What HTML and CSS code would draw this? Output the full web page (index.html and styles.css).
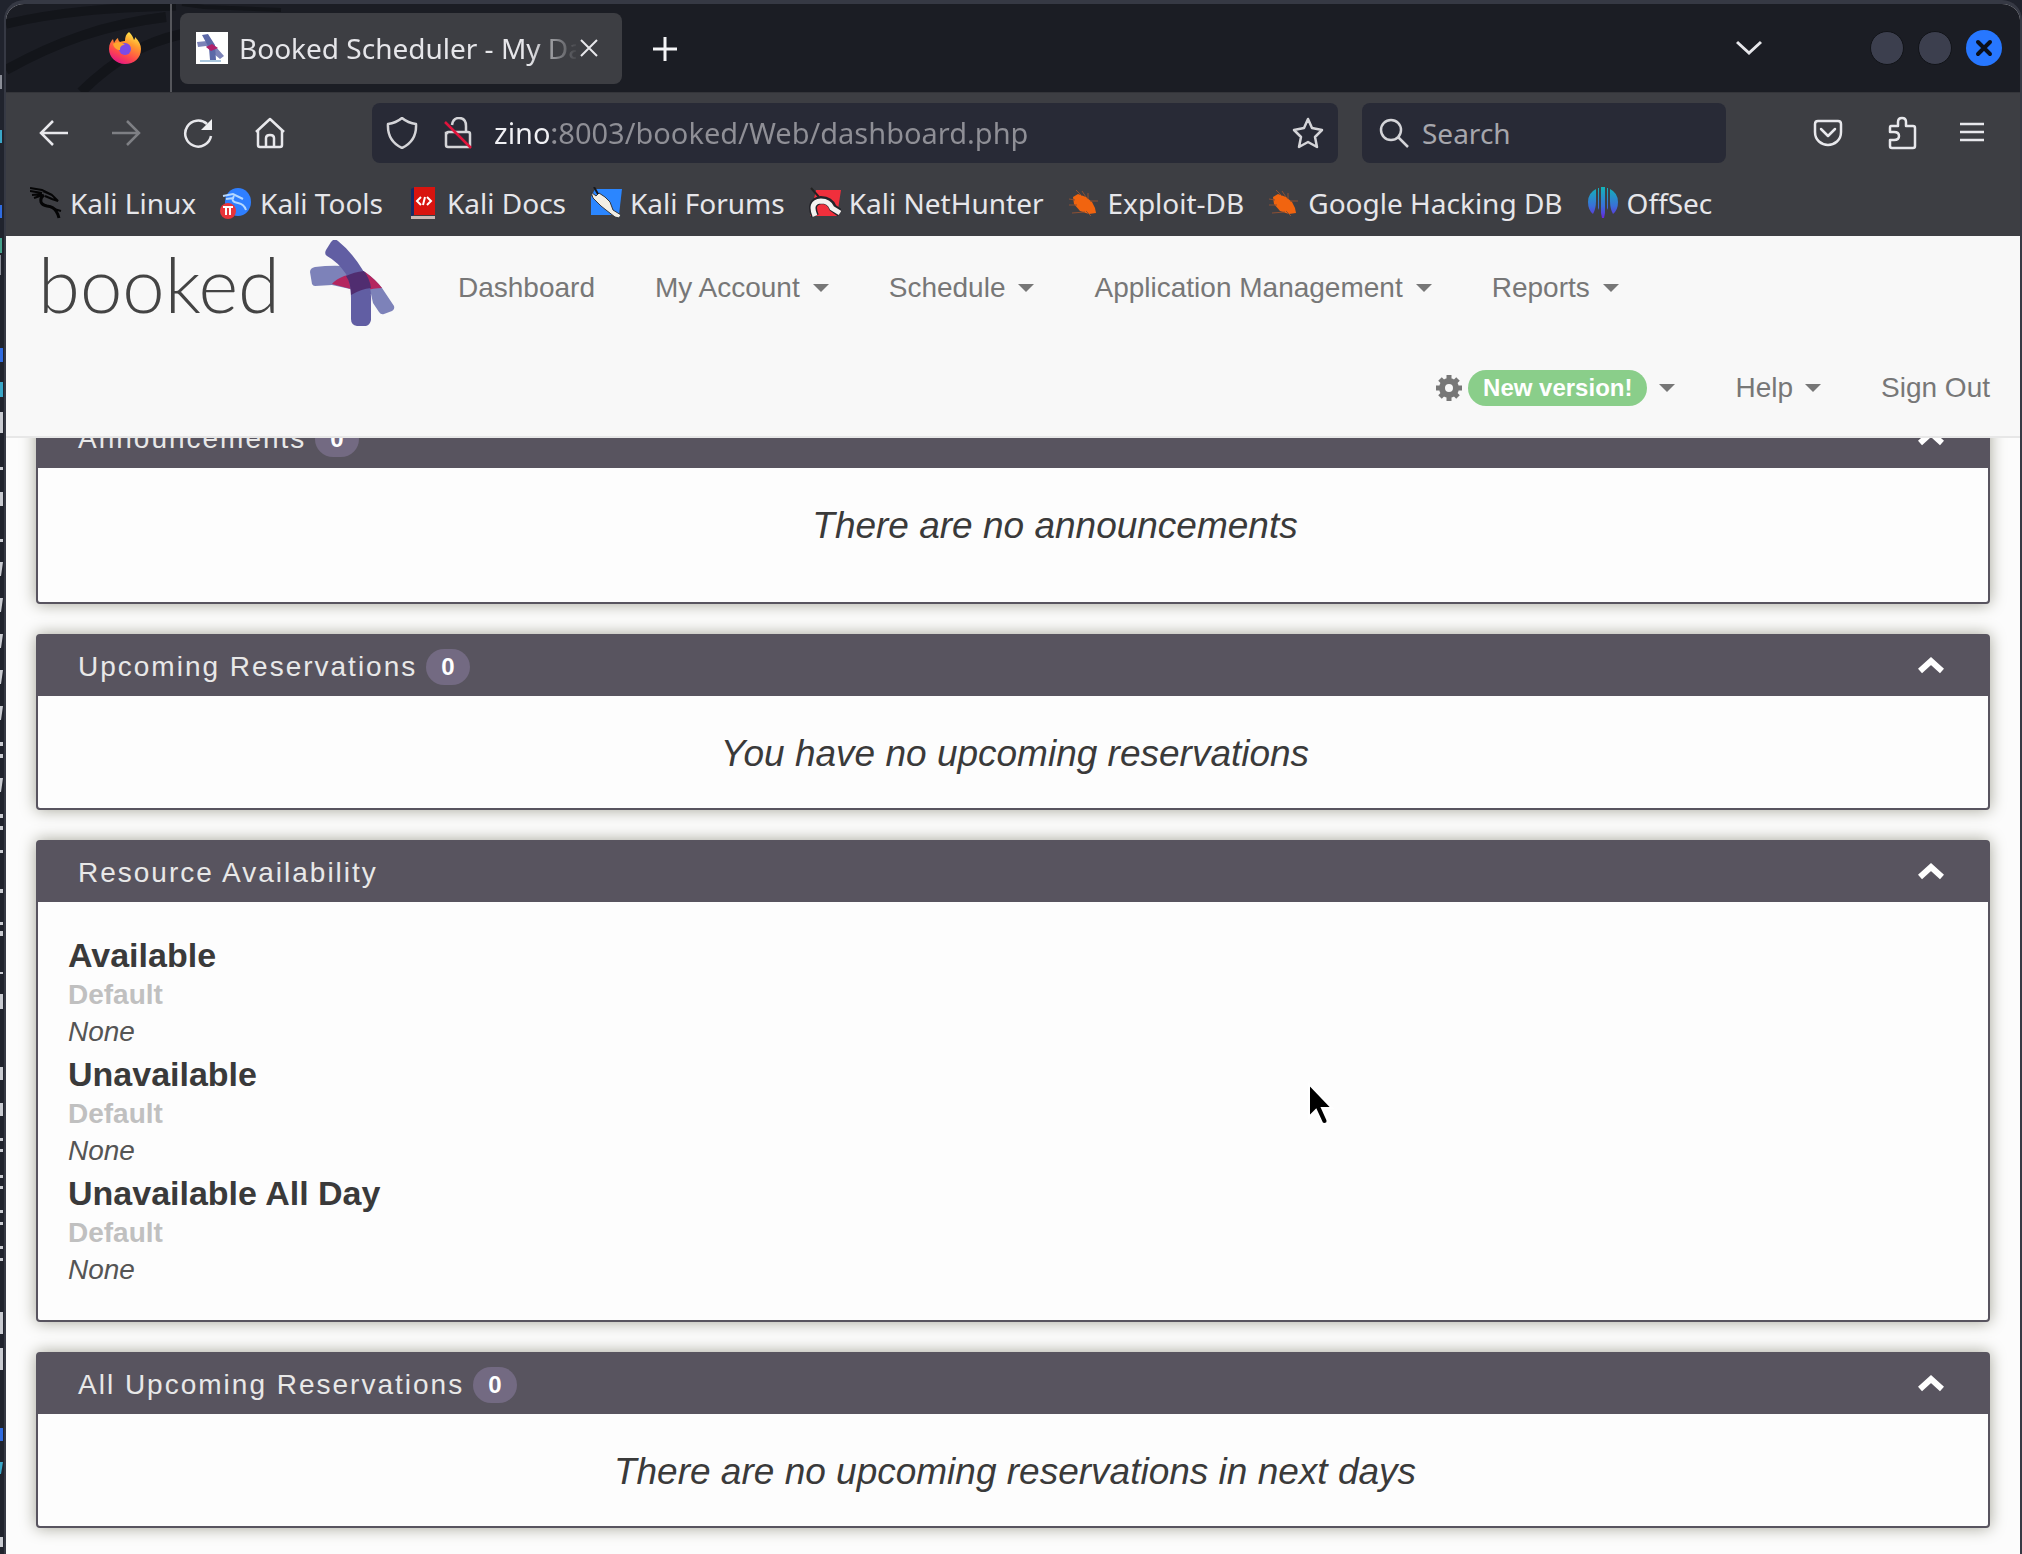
FILE: index.html
```html
<!DOCTYPE html>
<html lang="en">
<head>
<meta charset="utf-8">
<title>Booked Scheduler - My Dashboard</title>
<link rel="stylesheet" href="styles.css">
</head>
<body>
<svg class="desktop-edge" width="4" height="1554" viewBox="0 0 4 1554" aria-hidden="true">
  <g fill="#8b8e98"><path d="M0 75h2v14H0zM0 255h1v20H0z"/></g>
  <path fill="#3aa7c8" d="M0 130h2v13H0zM0 382h3v15H0zM0 1462h3l-2 12H0z"/>
  <path fill="#2f6be0" d="M0 205h2v13H0zM0 348h3v14H0zM0 1428h3v13H0z"/>
  <path fill="#46a28c" d="M0 238h2v15H0z"/>
  <path fill="#c9cbd1" d="M0 412h3v21H0zM0 467h3v3H0zM0 492h3v14H0zM0 539h3v3H0zM0 562h3l-2 14H0zM0 598h3l-2 14H0zM0 634h3l-2 14H0zM0 670h3l-2 14H0zM0 706h3l-2 14H0zM0 742h3v4H0zM0 754h3v4H0zM0 778h3l-2 14H0zM0 814h3v4H0zM0 826h3v4H0zM0 850h3v3H0zM0 889h3v4H0zM0 922h3v3H0zM0 931h3v5H0zM0 972h3v2H0zM0 994h3v15H0zM0 1067h3v13H0zM0 1103h3v13H0zM0 1138h3v3H0zM0 1149h3v3H0zM0 1175h3v3H0zM0 1186h3v3H0zM0 1210h3v3H0zM0 1222h3v3H0zM0 1246h3v3H0zM0 1258h3v3H0zM0 1312h3v22H0zM0 1348h3v22H0zM0 1537h3v10H0z"/>
</svg>
<div class="window">
  <div class="tabbar">
    <svg class="wallpaper" width="300" height="88" viewBox="0 0 300 88" fill="none" stroke="#13151a" aria-hidden="true">
      <path stroke-width="9" d="M0 20C50 8 100 4 170 2"/>
      <path stroke-width="10" d="M0 66C50 38 100 20 160 13"/>
      <path stroke-width="10" d="M75 88C110 54 140 38 176 30"/>
      <path stroke-width="4" d="M176 0L198 3L275 6"/>
    </svg>
    <button class="pinned" type="button" aria-label="Firefox View">
      <svg width="32" height="32" viewBox="0 0 32 32">
        <defs>
          <linearGradient id="flame" x1="0.8" y1="0" x2="0.3" y2="1"><stop offset="0" stop-color="#fff44f"/><stop offset=".35" stop-color="#ff9a2e"/><stop offset=".7" stop-color="#ff4a4a"/><stop offset="1" stop-color="#e31587"/></linearGradient>
        </defs>
        <path fill="url(#flame)" d="M20 0c3 3 4 5 5 8c1-1 1-2 1-3c4 4 6 8 6 12c0 9-7 15-16 15S0 25 0 17c0-5 2-8 4-10l1 4c1-2 2-4 4-5c0 2 1 3 2 4c2-1 4-1 5-1c0-4 1-7 4-9z"/>
        <circle cx="16" cy="17" r="6" fill="#7a4be8"/>
        <path fill="#ffa62e" d="M4 12c4-3 9-2 12 1c-4 0-5 2-5 5c-3 0-6-2-7-6z"/>
      </svg>
    </button>
    <div class="tab">
      <svg class="favicon" width="32" height="32" viewBox="0 0 32 32" aria-hidden="true">
        <path fill="#fff" d="M0 0h32v32H0z"/>
        <path fill="#7c83b8" d="M1 10l10-1 9 6 8 9-4 3-6-5-8-8-8 1z"/>
        <path fill="#5c69a8" d="M6 3l6-1 7 11 1 15h-6l-1-12z"/>
        <path fill="#b0216a" d="M10 15l6-3 6 4-7 3z"/>
        <path fill="#a9c6dd" d="M4 28h21v2H4z"/>
      </svg>
      <span class="tab-title">Booked Scheduler - My Dashboard</span>
      <button class="tab-close" type="button" aria-label="Close tab"><svg width="18" height="18" viewBox="0 0 18 18" fill="none" stroke="#e8e8ec" stroke-width="2"><path d="M1 1l16 16M17 1L1 17"/></svg></button>
    </div>
    <button class="new-tab" type="button" aria-label="New tab"><svg width="24" height="24" viewBox="0 0 24 24" fill="none" stroke="#f4f4f6" stroke-width="3"><path d="M12 0v24M0 12h24"/></svg></button>
    <div class="window-controls">
      <button class="all-tabs" type="button" aria-label="List all tabs"><svg width="26" height="16" viewBox="0 0 26 16" fill="none" stroke="#e6e6ea" stroke-width="3"><path d="M1 2l12 11L25 2"/></svg></button>
      <button class="dot" type="button" aria-label="Minimise"></button>
      <button class="dot" type="button" aria-label="Maximise"></button>
      <button class="dot dot-close" type="button" aria-label="Close"><svg width="18" height="18" viewBox="0 0 18 18" fill="none" stroke="#0b0f1a" stroke-width="4" stroke-linecap="round"><path d="M3 3l12 12M15 3L3 15"/></svg></button>
    </div>
  </div>

  <div class="toolbar">
    <div class="history">
      <button type="button" aria-label="Back"><svg width="32" height="32" viewBox="0 0 32 32" fill="none" stroke="#e8e8ec" stroke-width="2.5"><path d="M30 16H3M15 4L3 16l12 12"/></svg></button>
      <button type="button" aria-label="Forward"><svg width="32" height="32" viewBox="0 0 32 32" fill="none" stroke="#7e7f84" stroke-width="2.5"><path d="M2 16h27M17 4l12 12-12 12"/></svg></button>
      <button type="button" aria-label="Reload"><svg width="32" height="32" viewBox="0 0 32 32" fill="none" stroke="#e8e8ec" stroke-width="2.5"><path d="M29 19A13 13 0 1 1 25 7"/><path fill="#f0f0f2" stroke="none" d="M30 2v11H19z"/></svg></button>
      <button type="button" aria-label="Home"><svg width="32" height="32" viewBox="0 0 32 32" fill="none" stroke="#e8e8ec" stroke-width="2.5" stroke-linejoin="round"><path d="M2 15L16 2l14 13M4 14v14q0 2 2 2h20q2 0 2-2V14M12 30v-9q0-3 4-3t4 3v9"/></svg></button>
    </div>
    <div class="field url">
      <svg width="32" height="32" viewBox="0 0 32 32" fill="none" stroke="#d4d4d8" stroke-width="2.5" stroke-linejoin="round" aria-hidden="true"><path d="M16 1q6 5 14 6q1 17-14 24Q1 24 2 7q8-1 14-6z"/></svg>
      <svg class="lock" width="32" height="32" viewBox="0 0 32 32" fill="none" stroke="#d4d4d8" stroke-width="2.5" aria-hidden="true"><path d="M10 8q1-7 7-7q7 0 7 8v6M5 16q0-1 1-1h20q2 0 2 2v12q0 1-1 1H6q-2 0-2-2V16z"/><path stroke="#e0143c" d="M3 5l26 26"/></svg>
      <input class="address" type="text" aria-label="Address" value="zino:8003/booked/Web/dashboard.php">
      <button type="button" aria-label="Bookmark this page"><svg width="32" height="32" viewBox="0 0 32 32" fill="none" stroke="#d4d4d8" stroke-width="2.5" stroke-linejoin="round"><path d="M16 2l4 9 10 2-7 7 2 10-9-5-9 5 2-10-7-7 10-2z"/></svg></button>
    </div>
    <div class="field search">
      <svg width="32" height="32" viewBox="0 0 32 32" fill="none" stroke="#d4d4d8" stroke-width="2.5" aria-hidden="true"><circle cx="13" cy="13" r="10"/><path d="M20 20l10 10"/></svg>
      <input type="search" aria-label="Search" placeholder="Search">
    </div>
    <div class="tools">
      <button type="button" aria-label="Pocket"><svg width="32" height="32" viewBox="0 0 32 32" fill="none" stroke="#e8e8ec" stroke-width="2.5" stroke-linecap="round" stroke-linejoin="round"><path d="M6 4h20q3 0 3 3v8q0 6-4 9.500q-4 3.500-9 3.500t-9-3.500Q3 21 3 15V7q0-3 3-3zM9 12l7 7 7-7"/></svg></button>
      <button type="button" aria-label="Extensions"><svg width="32" height="34" viewBox="0 0 32 34" fill="none" stroke="#e8e8ec" stroke-width="2.5" stroke-linejoin="round"><path d="M5 10h7V6q0-4 4-4t4 4v4h7q2 0 2 2v18q0 2-2 2H6q-2 0-2-2v-6h4q5 0 5-4t-5-4H4v-4q0-2 1-2z"/></svg></button>
      <button type="button" aria-label="Menu"><svg width="24" height="24" viewBox="0 0 24 24" fill="none" stroke="#e8e8ec" stroke-width="2.5"><path d="M0 3h24M0 11h24M0 19h24"/></svg></button>
    </div>
  </div>

  <nav class="bookmarks" aria-label="Bookmarks">
    <a href="#"><svg width="32" height="32" viewBox="0 0 32 32" fill="none" stroke="#050506"><path stroke-width="2" d="M0 1l12 2 10 5M0 4l12 2M2 8l10-1M4 11l9-3M13 4l9 4 6 6-6-2-7-3"/><path stroke-width="3" d="M14 8q-4 3-3 7 1 3 6 4 7 1 9 5 2 3 3 7"/><path stroke-width="2" d="M24 22l7 2"/></svg>Kali Linux</a>
    <a href="#"><svg width="32" height="32" viewBox="0 0 32 32"><ellipse cx="18" cy="15" rx="13" ry="14" fill="#2f7fff"/><path fill="none" stroke="#b5d8ff" stroke-width="2" d="M3 9l10-2 10 5M6 12l8-1M14 9q-4 6 4 7q6 1 8 7"/><circle cx="8" cy="24" r="8" fill="#e8343a"/><path fill="none" stroke="#fff" stroke-width="2" d="M3 20h10M6 20v8M10 20v8"/></svg>Kali Tools</a>
    <a href="#"><svg width="32" height="32" viewBox="-3 0 32 32"><path fill="#182a66" d="M1 2l4-2v27l-4 3z"/><path fill="#d8140f" d="M4 0h21v28H4z"/><path fill="#c8b9b6" d="M1 29h24v3H1z"/><path fill="none" stroke="#fff" stroke-width="2" d="M11 10l-4 4 4 4M15 10l-2 8M17 10l4 4-4 4"/></svg>Kali Docs</a>
    <a href="#"><svg width="32" height="32" viewBox="0 0 32 32"><path fill="#2b86ff" d="M5 2h27l-3 26H1V10z"/><path fill="#f2eee4" stroke="#33363c" d="M1 5l5 4 3-3 6 4 5 5 3 8 8 5-2 3-4-1-9-7-5-4-8-8z"/><path stroke="#17181c" stroke-width="2" d="M4 0l4 7"/></svg>Kali Forums</a>
    <a href="#"><svg width="32" height="32" viewBox="0 0 32 32"><path fill="#f02f3c" d="M7 3h25l-4 26H1z"/><path fill="none" stroke="#23242a" stroke-width="8" d="M6 29q-6-14 6-16q9 0 12 8l7 5"/><path fill="none" stroke="#f4f1ef" stroke-width="5" d="M6 29q-6-14 6-15q8 0 11 7l8 5"/><path stroke="#222" stroke-width="2" d="M2 1l8 9"/></svg>Kali NetHunter</a>
    <a href="#"><svg width="32" height="32" viewBox="0 0 32 32"><path fill="#f1640f" d="M5 10l5-3 8 3 6 5 3 6 1 5-7 1-9-3-6-7z"/><path fill="none" stroke="#8c5034" d="M8 3l6 6M14 4l4 6M1 12l6 1M1 18l8 0M4 26l13-1M22 14l8 0M20 6l0 6M18 24l5 5"/></svg>Exploit-DB</a>
    <a href="#"><svg width="32" height="32" viewBox="0 0 32 32"><path fill="#f1640f" d="M5 10l5-3 8 3 6 5 3 6 1 5-7 1-9-3-6-7z"/><path fill="none" stroke="#8c5034" d="M8 3l6 6M14 4l4 6M1 12l6 1M1 18l8 0M4 26l13-1M22 14l8 0M20 6l0 6M18 24l5 5"/></svg>Google Hacking DB</a>
    <a href="#"><svg width="32" height="32" viewBox="0 0 32 32"><defs><linearGradient id="offsec" gradientUnits="userSpaceOnUse" x1="0" y1="0" x2="0" y2="32"><stop offset="0" stop-color="#12b5b8"/><stop offset=".6" stop-color="#3a6fd8"/><stop offset="1" stop-color="#6a1fe0"/></linearGradient></defs><path fill="url(#offsec)" d="M9 2Q1 6 1 15q0 8 5 12q3-5 3-13zM23 2q8 4 8 13q0 8-5 12q-3-5-3-13zM11 1h1v20l-1 2zM20 1h1v22l-1-2zM14 0h4v26l-1 5h-2l-1-5z"/></svg>OffSec</a>
  </nav>

  <header class="site-header">
    <a class="brand" href="#" aria-label="booked">
      <span class="wordmark">booked</span>
      <svg width="88" height="88" viewBox="0 0 88 88" aria-hidden="true">
        <path fill="#7d82b9" d="M5 27q15-2 30-1 12 3 20 6 10 7 17 16l12 18q1 3-2 5l-8 3q-3 1-5-2l-6-9-2-9Q50 54 40 49L22 45 5 46q-2 0-3-2L0 32q0-4 5-5z"/>
        <path fill="#b4265f" d="M22 44q8-10 33-12 10 7 17 16-8 0-19 3l-12 4V49z"/>
        <path fill="#615ea3" d="M23 0q3-1 5 1Q42 12 54 32q8 14 7 30v18q-1 5-5 6h-9q-6-1-6-7V58q0-16-5-24-8-12-19-18-3-2-1-6l5-8z"/>
        <path fill="#502d70" d="M36 36q8-4 18-5 6 8 7 17-10 1-20 7 0-12-5-19z"/>
      </svg>
    </a>
    <nav class="menus" aria-label="Main">
      <ul class="menu">
        <li><a href="#">Dashboard</a></li>
        <li><a href="#">My Account<span class="caret"></span></a></li>
        <li><a href="#">Schedule<span class="caret"></span></a></li>
        <li><a href="#">Application Management<span class="caret"></span></a></li>
        <li><a href="#">Reports<span class="caret"></span></a></li>
      </ul>
    </nav>
    <ul class="menu menu-right">
      <li><a href="#"><svg width="26" height="26" viewBox="0 0 26 26" aria-label="Settings"><path fill="none" stroke="#777" stroke-width="5" d="M13 0v6M13 20v6M0 13h6M20 13h6M4 4l4 4M18 18l4 4M22 4l-4 4M8 18l-4 4"/><circle cx="13" cy="13" r="7" fill="none" stroke="#777" stroke-width="6"/></svg><span class="badge badge-new">New version!</span><span class="caret"></span></a></li>
      <li><a href="#">Help<span class="caret"></span></a></li>
      <li><a href="#">Sign Out</a></li>
    </ul>
  </header>

  <main class="dashboard">
    <section class="card">
      <header class="card-head"><h2>Announcements</h2><span class="badge">0</span>
        <button type="button" aria-label="Collapse"><svg width="26" height="18" viewBox="0 0 26 18" fill="none" stroke="#fff" stroke-width="6"><path d="M2 15L13 5l11 10"/></svg></button></header>
      <div class="card-body announcements"><p class="empty">There are no announcements</p></div>
    </section>
    <section class="card">
      <header class="card-head"><h2>Upcoming Reservations</h2><span class="badge">0</span>
        <button type="button" aria-label="Collapse"><svg width="26" height="18" viewBox="0 0 26 18" fill="none" stroke="#fff" stroke-width="6"><path d="M2 15L13 5l11 10"/></svg></button></header>
      <div class="card-body"><p class="empty">You have no upcoming reservations</p></div>
    </section>
    <section class="card">
      <header class="card-head"><h2>Resource Availability</h2>
        <button type="button" aria-label="Collapse"><svg width="26" height="18" viewBox="0 0 26 18" fill="none" stroke="#fff" stroke-width="6"><path d="M2 15L13 5l11 10"/></svg></button></header>
      <div class="card-body availability">
        <div class="status"><h3>Available</h3><h4>Default</h4><p>None</p></div>
        <div class="status"><h3>Unavailable</h3><h4>Default</h4><p>None</p></div>
        <div class="status"><h3>Unavailable All Day</h3><h4>Default</h4><p>None</p></div>
      </div>
    </section>
    <section class="card">
      <header class="card-head"><h2>All Upcoming Reservations</h2><span class="badge">0</span>
        <button type="button" aria-label="Collapse"><svg width="26" height="18" viewBox="0 0 26 18" fill="none" stroke="#fff" stroke-width="6"><path d="M2 15L13 5l11 10"/></svg></button></header>
      <div class="card-body"><p class="empty">There are no upcoming reservations in next days</p></div>
    </section>
  </main>
</div>
<svg class="pointer" width="28" height="44" viewBox="0 0 28 44" aria-hidden="true"><path fill="#000" stroke="#fff" stroke-width="2" d="M1 2v33l7-7 6 13q2 2 5 0 1-2 0-4l-5-11h10z"/></svg>
</body>
</html>
```
FILE: styles.css
```css
*, *::before, *::after { box-sizing: border-box; }
body {
  margin: 0;
  background: #20232d;
  font-family: "Liberation Sans", Arial, sans-serif;
  font-size: 28px;
  line-height: 40px;
  color: #3a3a3a;
}
h2, h3, h4, p, ul { margin: 0; padding: 0; }
ul { list-style: none; }
a { color: inherit; text-decoration: none; }
button { padding: 0; border: 0; background: none; color: inherit; display: flex; align-items: center; justify-content: center; }
svg { display: block; flex: none; }
input { font: inherit; color: inherit; border: 0; padding: 0; background: none; min-width: 0; outline: 0; }

.desktop-edge { position: absolute; left: 0; top: 0; }
.window {
  display: flex;
  flex-direction: column;
  min-height: 100vh;
  margin-left: 4px;
  border: 2px solid #363944;
  border-top-width: 4px;
  border-bottom: 0;
  border-radius: 20px 20px 0 0;
  background: #fcfcfc;
  overflow: hidden;
}

/* Browser chrome */
.tabbar, .toolbar, .bookmarks { font-family: "Noto Sans", sans-serif; color: #e6e6ea; }
.tabbar { position: relative; display: flex; align-items: center; height: 88px; background: #1b1d24; }
.wallpaper { position: absolute; left: 0; top: 0; }
.tabbar > * { z-index: 1; }
.tabbar > .wallpaper { z-index: 0; }
.pinned { width: 166px; height: 88px; padding-right: 29px; justify-content: flex-end; border-right: 2px solid #55565b; }
.tab { display: flex; align-items: center; width: 442px; height: 71px; margin-left: 8px; padding: 0 24px 0 16px; border-radius: 8px; background: #3d3e43; }
.tab-title {
  flex: 1;
  margin-left: 11px;
  overflow: hidden;
  white-space: nowrap;
  -webkit-mask-image: linear-gradient(90deg, #000 290px, transparent 340px);
  mask-image: linear-gradient(90deg, #000 290px, transparent 340px);
}
.tab-close { margin-left: 4px; }
.new-tab { margin: 2px 0 0 31px; }
.window-controls { display: flex; align-items: center; gap: 14px; margin-left: auto; padding-right: 18px; }
.all-tabs { margin-right: 94px; }
.dot { width: 34px; height: 34px; border: 1px solid #111318; border-radius: 50%; background: #3c3f4e; }
.dot-close { width: 36px; height: 36px; border: 0; background: #2777ff; }

.toolbar { display: flex; align-items: center; padding: 10px 36px 10px 32px; background: #3d3e43; border-top: 1px solid #34353a; }
.history { display: flex; gap: 40px; margin-right: 86px; }
.field { display: flex; align-items: center; height: 60px; border-radius: 8px; background: #282a36; }
.url { flex: 1; padding: 0 14px; }
.lock { margin: 0 20px 0 24px; }
.address {
  flex: 1;
  font-size: 29px;
  color: transparent;
  background-image: linear-gradient(90deg, #f0f0f4 59px, #8f8f96 59px);
  -webkit-background-clip: text;
  background-clip: text;
}
.search { width: 364px; margin-left: 24px; padding: 0 16px; gap: 12px; }
.search input { flex: 1; }
.search input::placeholder { color: #a6a6ac; opacity: 1; }
.tools { display: flex; align-items: center; gap: 42px; margin-left: 86px; }

.bookmarks { display: flex; align-items: center; gap: 24px; height: 63px; padding: 0 22px 4px 24px; background: #3d3e43; white-space: nowrap; }
.bookmarks a { display: flex; align-items: center; gap: 8px; }

/* Application header */
.site-header { position: relative; z-index: 2; display: grid; grid-template-columns: 422px 1fr; background: #f8f8f8; border-bottom: 2px solid #e7e7e7; color: #777; }
.brand { display: flex; align-items: flex-start; gap: 24px; height: 100px; padding: 4px 0 0 32px; }
.wordmark { width: 248px; font-family: Lato, sans-serif; font-weight: 300; font-size: 76px; line-height: 88px; color: #444; }
.menu { display: flex; }
.menu a { display: flex; align-items: center; height: 100px; padding: 4px 30px 0; white-space: nowrap; }
.menu-right { grid-column: 1 / -1; justify-content: flex-end; }
.caret { margin-left: 13px; border: 8px solid transparent; border-top-color: #777; border-bottom: 0; }
.badge { padding: 0 15px; border-radius: 18px; background: #736a82; color: #fff; font-size: 24px; font-weight: bold; line-height: 36px; }
.badge-new { margin-left: 6px; background: #8ace8a; }
.menu-right .caret { margin-left: 12px; }

/* Dashboard cards */
.dashboard { display: flex; flex-direction: column; gap: 30px; margin-top: -32px; padding: 0 30px 27px; }
.card { border: 2px solid #58545f; border-radius: 4px; background: #fdfdfd; box-shadow: 0 0 16px #a3a396; }
.card-head { display: flex; align-items: center; height: 60px; padding: 2px 44px 0 40px; background: #58545f; color: #e8e8e8; }
.card-head h2 { font-size: 28px; font-weight: normal; letter-spacing: 2px; }
.card-head .badge { margin-left: 9px; }
.card-head button { margin: 0 0 4px auto; }
.card-body { padding: 36px 26px 32px; }
.empty { padding-left: 4px; font-size: 37px; line-height: 44px; font-style: italic; text-align: center; }
.announcements { padding-left: 106px; padding-bottom: 54px; }
.availability { display: flex; flex-direction: column; gap: 4px; padding: 33px 30px 32px; }
.status h3 { font-size: 34px; line-height: 41px; }
.status h4 { font-size: 28px; line-height: 37px; color: #c0c0c0; }
.status p { line-height: 37px; font-style: italic; color: #555; }

.pointer { position: absolute; left: 1308px; top: 1082px; }
```
